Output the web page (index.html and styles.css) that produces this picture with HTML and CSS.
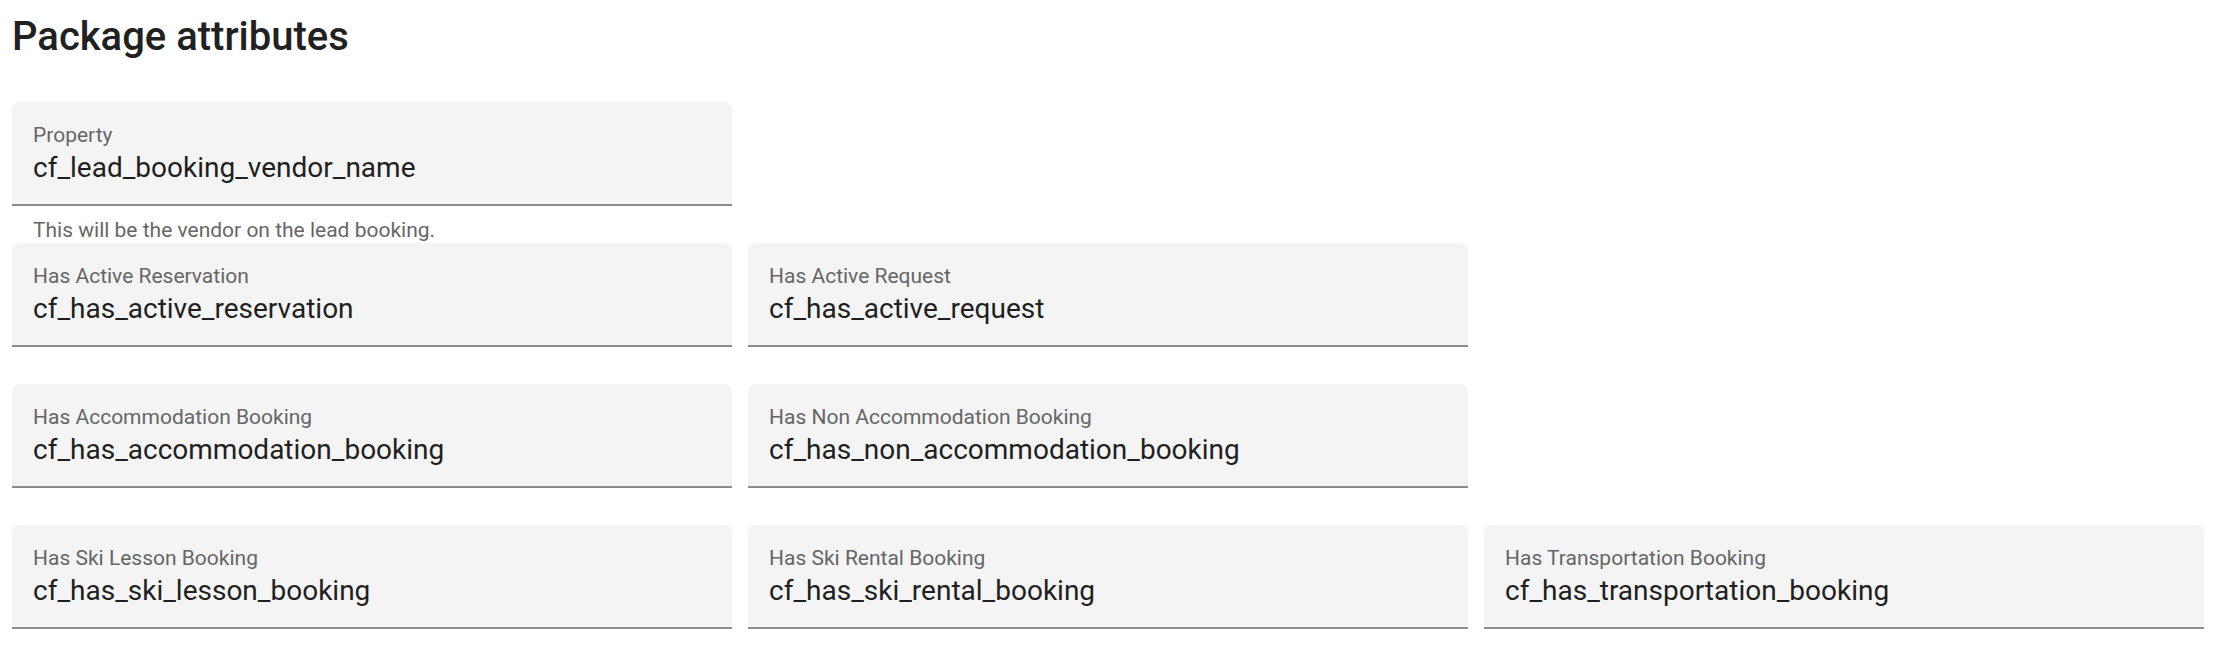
FILE: index.html
```html
<!DOCTYPE html>
<html lang="en">
<head>
    <meta charset="UTF-8">
    <meta name="viewport" content="width=device-width, initial-scale=1.0">
    <title>Package attributes</title>
    <link rel="stylesheet" href="styles.css">
</head>
<body>
    <div class="page">
        <h1>Package attributes</h1>
        <div class="grid">
            <div class="cell">
                <div class="field">
                    <span class="label">Property</span>
                    <span class="value">cf_lead_booking_vendor_name</span>
                </div>
                <div class="hint">This will be the vendor on the lead booking.</div>
            </div>
            <div class="cell"></div>
            <div class="cell"></div>

            <div class="cell">
                <div class="field">
                    <span class="label">Has Active Reservation</span>
                    <span class="value">cf_has_active_reservation</span>
                </div>
                <div class="hint"></div>
            </div>
            <div class="cell">
                <div class="field">
                    <span class="label">Has Active Request</span>
                    <span class="value">cf_has_active_request</span>
                </div>
                <div class="hint"></div>
            </div>
            <div class="cell"></div>

            <div class="cell">
                <div class="field">
                    <span class="label">Has Accommodation Booking</span>
                    <span class="value">cf_has_accommodation_booking</span>
                </div>
                <div class="hint"></div>
            </div>
            <div class="cell">
                <div class="field">
                    <span class="label">Has Non Accommodation Booking</span>
                    <span class="value">cf_has_non_accommodation_booking</span>
                </div>
                <div class="hint"></div>
            </div>
            <div class="cell"></div>

            <div class="cell">
                <div class="field">
                    <span class="label">Has Ski Lesson Booking</span>
                    <span class="value">cf_has_ski_lesson_booking</span>
                </div>
                <div class="hint"></div>
            </div>
            <div class="cell">
                <div class="field">
                    <span class="label">Has Ski Rental Booking</span>
                    <span class="value">cf_has_ski_rental_booking</span>
                </div>
                <div class="hint"></div>
            </div>
            <div class="cell">
                <div class="field">
                    <span class="label">Has Transportation Booking</span>
                    <span class="value">cf_has_transportation_booking</span>
                </div>
                <div class="hint"></div>
            </div>
        </div>
    </div>
</body>
</html>
```

FILE: styles.css
```css
body {
    margin: 0;
    font-family: Roboto, "Noto Sans", sans-serif;
    background-color: #ffffff;
    color: #212121;
}
.page {
    padding: 12px;
}
h1 {
    font-size: 40px;
    line-height: 48px;
    font-weight: 500;
    margin: 1px 0 41px 0;
    color: #212121;
}
.grid {
    display: grid;
    grid-template-columns: repeat(3, 1fr);
    column-gap: 16px;
}
.field {
    box-sizing: border-box;
    height: 104px;
    background-color: #f4f4f4;
    border-radius: 8px 8px 0 0;
    border-bottom: 2px solid #8c8c8c;
    padding: 21px 21px 0 21px;
    display: flex;
    flex-direction: column;
}
.label {
    font-size: 21px;
    line-height: 24px;
    color: #666666;
}
.value {
    font-size: 28px;
    line-height: 36px;
    margin-top: 3px;
    color: #1f1f1f;
}
.hint {
    height: 37px;
    box-sizing: border-box;
    padding: 12px 21px 0 21px;
    font-size: 21px;
    line-height: 24px;
    color: #666666;
}
```
